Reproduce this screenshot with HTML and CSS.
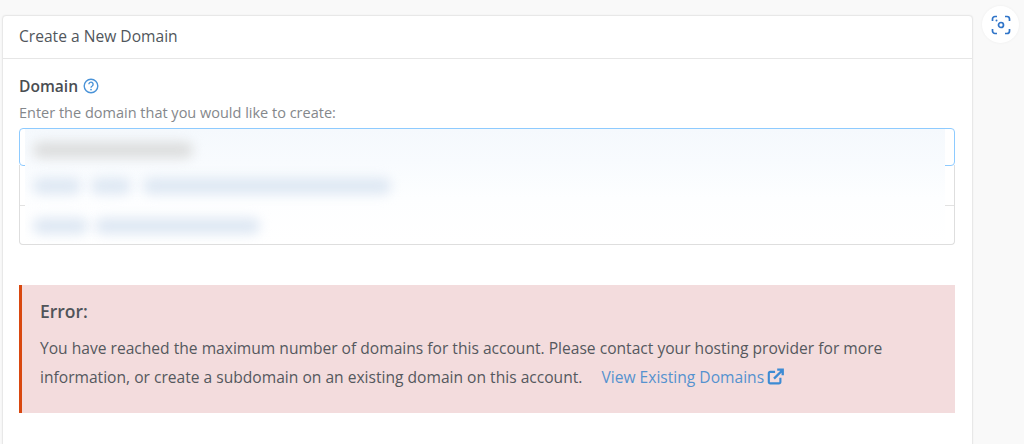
FILE: index.html
```html
<!DOCTYPE html>
<html lang="en">
<head>
<meta charset="utf-8">
<title>Create a New Domain</title>
<link rel="stylesheet" href="styles.css">
</head>
<body>
<div class="page">
  <main class="panel">
    <h1 class="panel-title">Create a New Domain</h1>
    <div class="panel-body">
      <div class="label-row">
        <span class="label">Domain</span>
        <svg class="help" viewBox="0 0 16 16" width="16" height="16" aria-hidden="true">
          <circle cx="8" cy="8" r="6.8" fill="none" stroke="#4a93d8" stroke-width="1.4"/>
          <path d="M5.9 6.3a2.1 2.1 0 1 1 3.3 1.7c-.8.5-1.2.9-1.2 1.7" fill="none" stroke="#4a93d8" stroke-width="1.4"/>
          <circle cx="8" cy="11.6" r=".9" fill="#4a93d8"/>
        </svg>
      </div>
      <p class="hint">Enter the domain that you would like to create:</p>
      <div class="combo">
        <div class="input"></div>
        <div class="options">
          <div class="option"></div>
          <div class="option"></div>
        </div>
        <div class="veil">
          <span class="smear smear-grey"></span>
          <span class="smear smear-blue smear-a"></span>
          <span class="smear smear-blue smear-b"></span>
          <span class="smear smear-blue smear-c"></span>
          <span class="smear smear-blue smear-d"></span>
          <span class="smear smear-blue smear-e"></span>
        </div>
      </div>
      <section class="alert">
        <h2 class="alert-title">Error:</h2>
        <p class="alert-text">You have reached the maximum number of domains for this account. Please contact your hosting provider for more information, or create a subdomain on an existing domain on this account. <a class="alert-link" href="#">View Existing Domains<svg class="ext" viewBox="0 0 16 16" width="17" height="17" aria-hidden="true"><path d="M12.6 9.2v4a1.3 1.3 0 0 1-1.3 1.300H3a1.3 1.3 0 0 1-1.3-1.300V5A1.3 1.3 0 0 1 3 3.700h4.600" fill="none" stroke="#3d8bd4" stroke-width="2"/><path d="M6.600 10 14 2.600M9.600 1.600h5.200v5.200" fill="none" stroke="#3d8bd4" stroke-width="2.200"/></svg></a></p>
      </section>
    </div>
  </main>
  <aside class="side">
    <button class="lens" type="button" aria-label="Search with image">
      <svg viewBox="0 0 20 20" width="20" height="20" aria-hidden="true">
        <path d="M1.500 6V4a2.500 2.500 0 0 1 2.500-2.500h2M14 1.500h2A2.500 2.500 0 0 1 18.500 4v2M18.500 14v2a2.500 2.500 0 0 1-2.500 2.500h-2M6 18.500H4A2.500 2.500 0 0 1 1.500 16v-2" fill="none" stroke="#2f74c8" stroke-width="1.700"/>
        <circle cx="10" cy="10" r="2.500" fill="none" stroke="#2f74c8" stroke-width="1.700"/>
        <circle cx="5.500" cy="5.500" r="1" fill="#2f74c8"/>
      </svg>
    </button>
  </aside>
</div>
</body>
</html>
```
FILE: styles.css
```css
* { box-sizing: border-box; }
html, body { margin: 0; height: 100%; }
body {
  background: #f9f9f9;
  font-family: "Open Sans", "Liberation Sans", sans-serif;
  color: #4f5359;
  overflow: hidden;
}
.page {
  display: flex;
  align-items: flex-start;
  padding: 15px 0 0 2px;
  height: 444px;
  overflow: hidden;
}
.panel {
  flex: 0 0 971px;
  height: 460px;
  background: #fff;
  border: 1px solid #e8e8e8;
  border-radius: 4px;
  box-shadow: 0 0 2px rgba(0,0,0,.06);
}
.panel-title {
  margin: 0;
  height: 43px;
  padding: 0 16px;
  font-size: 15.600px;
  line-height: 41px;
  font-weight: 400;
  color: #51565c;
  border-bottom: 1px solid #e6e6e6;
}
.panel-body { padding: 17px 16px 0; }
.label-row { display: flex; align-items: center; gap: 5px; height: 20px; }
.label { font-size: 15.600px; font-weight: 600; color: #4a4d52; }
.help { flex: none; }
.hint { margin: 8px 0 0; font-size: 14.500px; line-height: 18px; color: #84878b; }
.combo { position: relative; margin-top: 6px; width: 936px; }
.input {
  height: 38px;
  border: 1.500px solid #8ecbff;
  border-radius: 4px;
  background: #fff;
}
.options {
  border: 1px solid #dedede;
  border-top: 0;
  border-radius: 0 0 4px 4px;
  margin-top: -1px;
}
.option { height: 40px; }
.option + .option { height: 39px; border-top: 1px solid #e2e2e2; }
.veil {
  position: absolute;
  left: 6px; right: 10px; top: 1px; bottom: 1px;
  background: linear-gradient(#f5f9fd 0%, #f8fbfe 28%, #fdfeff 60%, #fff 100%);
  overflow: hidden;
}
.smear {
  position: absolute;
  height: 16px;
  border-radius: 8px;
  filter: blur(6px);
}
.smear-grey { left: 8px; top: 13px; width: 160px; background: #dcdddd; }
.smear-blue { background: #dde7f3; }
.smear-a { left: 8px; top: 49px; width: 48px; }
.smear-b { left: 66px; top: 49px; width: 40px; }
.smear-c { left: 118px; top: 49px; width: 248px; }
.smear-d { left: 8px; top: 89px; width: 55px; }
.smear-e { left: 70px; top: 89px; width: 165px; }
.alert {
  margin-top: 40px;
  width: 936px;
  height: 128px;
  padding: 13px 17px 0 18px;
  background: #f3dcdd;
  border-left: 3px solid #d9480f;
}
.alert-title {
  margin: 0;
  font-size: 17.500px;
  line-height: 26px;
  font-weight: 600;
  color: #505459;
}
.alert-text {
  margin: 10px 0 0;
  font-size: 15.600px;
  line-height: 29px;
  color: #55585d;
}
.alert-link { margin-left: 15px; color: #5592cf; text-decoration: none; }
.ext { margin-left: 3px; vertical-align: -2px; }
.side { flex: 1; display: flex; padding: 0 0 0 9px; margin-top: -9px; }
.lens {
  width: 37px;
  height: 37px;
  padding: 0;
  border: 0;
  border-radius: 50%;
  background: #fff;
  box-shadow: 0 0 3px rgba(0,0,0,.05);
  display: flex;
  align-items: center;
  justify-content: center;
}
```
